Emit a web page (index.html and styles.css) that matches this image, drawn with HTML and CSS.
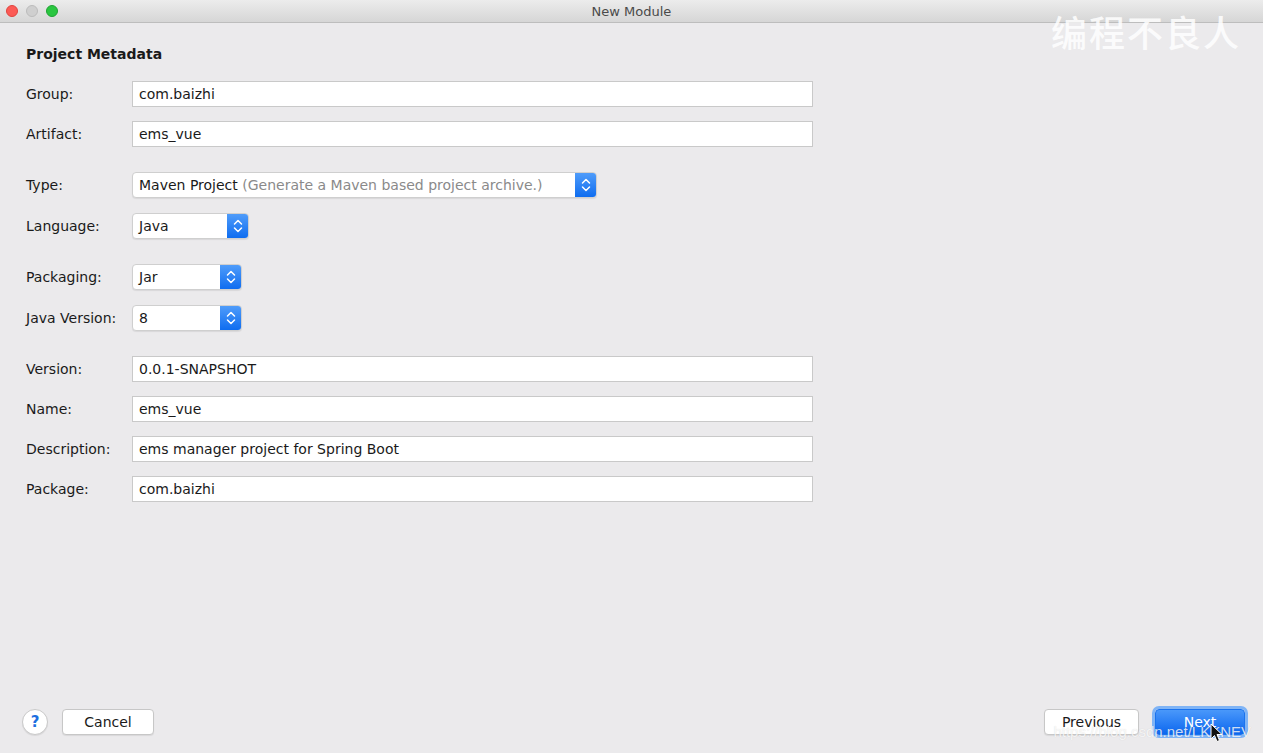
FILE: index.html
```html
<!DOCTYPE html>
<html lang="en">
<head>
    <meta charset="UTF-8">
    <title>New Module</title>
    <link rel="stylesheet" href="styles.css">
</head>
<body>
    <div class="window">
        <div class="titlebar">
            <div class="lights">
                <span class="light red"></span>
                <span class="light gray"></span>
                <span class="light green"></span>
            </div>
            <div class="title">New Module</div>
            <div class="watermark-top">编程不良人</div>
        </div>

        <div class="content">
            <h1 class="heading">Project Metadata</h1>

            <div class="group">
                <div class="row">
                    <label>Group:</label>
                    <div class="field wide">com.baizhi</div>
                </div>
                <div class="row">
                    <label>Artifact:</label>
                    <div class="field wide">ems_vue</div>
                </div>
            </div>

            <div class="group selects">
                <div class="row">
                    <label>Type:</label>
                    <div class="select type-select">
                        <span class="select-text">Maven Project <span class="hint">(Generate a Maven based project archive.)</span></span>
                        <span class="select-btn">
                            <svg width="10" height="16" viewBox="0 0 10 16"><path d="M1.5 6 L5 2.5 L8.5 6 M1.5 10 L5 13.5 L8.5 10" fill="none" stroke="#fff" stroke-width="1.5" stroke-linecap="round" stroke-linejoin="round"/></svg>
                        </span>
                    </div>
                </div>
                <div class="row">
                    <label>Language:</label>
                    <div class="select lang-select">
                        <span class="select-text">Java</span>
                        <span class="select-btn">
                            <svg width="10" height="16" viewBox="0 0 10 16"><path d="M1.5 6 L5 2.5 L8.5 6 M1.5 10 L5 13.5 L8.5 10" fill="none" stroke="#fff" stroke-width="1.5" stroke-linecap="round" stroke-linejoin="round"/></svg>
                        </span>
                    </div>
                </div>
            </div>

            <div class="group selects">
                <div class="row">
                    <label>Packaging:</label>
                    <div class="select small-select">
                        <span class="select-text">Jar</span>
                        <span class="select-btn">
                            <svg width="10" height="16" viewBox="0 0 10 16"><path d="M1.5 6 L5 2.5 L8.5 6 M1.5 10 L5 13.5 L8.5 10" fill="none" stroke="#fff" stroke-width="1.5" stroke-linecap="round" stroke-linejoin="round"/></svg>
                        </span>
                    </div>
                </div>
                <div class="row">
                    <label>Java Version:</label>
                    <div class="select small-select">
                        <span class="select-text">8</span>
                        <span class="select-btn">
                            <svg width="10" height="16" viewBox="0 0 10 16"><path d="M1.5 6 L5 2.5 L8.5 6 M1.5 10 L5 13.5 L8.5 10" fill="none" stroke="#fff" stroke-width="1.5" stroke-linecap="round" stroke-linejoin="round"/></svg>
                        </span>
                    </div>
                </div>
            </div>

            <div class="group">
                <div class="row">
                    <label>Version:</label>
                    <div class="field wide">0.0.1-SNAPSHOT</div>
                </div>
                <div class="row">
                    <label>Name:</label>
                    <div class="field wide">ems_vue</div>
                </div>
                <div class="row">
                    <label>Description:</label>
                    <div class="field wide">ems manager project for Spring Boot</div>
                </div>
                <div class="row">
                    <label>Package:</label>
                    <div class="field wide">com.baizhi</div>
                </div>
            </div>
        </div>

        <div class="footer">
            <div class="footer-left">
                <button class="help-btn">?</button>
                <button class="btn cancel-btn">Cancel</button>
            </div>
            <div class="footer-right">
                <button class="btn prev-btn">Previous</button>
                <button class="btn next-btn">Next</button>
            </div>
            <div class="watermark-bottom">https://blog.csdn.net/LKKNEV</div>
            <svg class="cursor" width="14" height="20" viewBox="0 0 14 20"><path d="M1 1 L1 16 L4.5 12.5 L7 18.5 L9.5 17.5 L7 11.5 L12 11.5 Z" fill="#111" stroke="#fff" stroke-width="1"/></svg>
        </div>
    </div>
</body>
</html>
```

FILE: styles.css
```css
* {
    margin: 0;
    padding: 0;
    box-sizing: border-box;
}

body {
    width: 1263px;
    height: 753px;
    overflow: hidden;
    background: #ebeaec;
    font-family: "DejaVu Sans", "Noto Sans CJK SC", sans-serif;
    font-size: 14px;
    color: #1a1a1a;
}

.window {
    height: 753px;
    display: flex;
    flex-direction: column;
}

.titlebar {
    position: relative;
    height: 23px;
    background: linear-gradient(#ececec, #d6d6d6);
    border-bottom: 1px solid #bdbdbd;
    display: flex;
    align-items: center;
    justify-content: center;
}

.lights {
    position: absolute;
    left: 6px;
    top: 5px;
    display: flex;
    gap: 8px;
}

.light {
    width: 12px;
    height: 12px;
    border-radius: 50%;
}

.light.red { background: #fc5a55; border: 1px solid #e0443e; }
.light.gray { background: #cfcfcf; border: 1px solid #bcbcbc; }
.light.green { background: #2ac640; border: 1px solid #1fa332; }

.title {
    font-size: 13px;
    color: #4a4a4a;
}

.watermark-top {
    position: absolute;
    left: 1051px;
    top: 9px;
    font-family: "Noto Sans CJK SC", sans-serif;
    font-size: 36px;
    line-height: 44px;
    letter-spacing: 2px;
    font-weight: 500;
    color: rgba(255, 255, 255, 0.85);
    z-index: 2;
}

.content {
    flex: 1;
    padding: 22px 0 0 26px;
}

.heading {
    font-size: 14px;
    font-weight: bold;
    line-height: 18px;
    margin-bottom: 18px;
}

.group {
    display: flex;
    flex-direction: column;
    gap: 14px;
    margin-bottom: 25px;
}

.group.selects {
    gap: 15px;
}

.row {
    display: flex;
    align-items: center;
    height: 26px;
}

.row label {
    width: 106px;
    flex-shrink: 0;
}

.field {
    height: 26px;
    background: #fff;
    border: 1px solid #c9c9c9;
    padding: 0 6px;
    line-height: 24px;
}

.field.wide {
    width: 681px;
}

.select {
    height: 26px;
    display: flex;
    background: #fff;
    border: 1px solid #cfcfcf;
    border-radius: 4px;
    box-shadow: 0 1px 1px rgba(0, 0, 0, 0.08);
    overflow: hidden;
}

.type-select { width: 465px; }
.lang-select { width: 117px; }
.small-select { width: 110px; }

.select-text {
    flex: 1;
    padding-left: 6px;
    line-height: 24px;
    white-space: nowrap;
}

.hint {
    color: #8a8a8a;
}

.select-btn {
    width: 21px;
    background: linear-gradient(#4f9cfa, #0f6df0);
    display: flex;
    align-items: center;
    justify-content: center;
}

.footer {
    position: relative;
    height: 56px;
    display: flex;
    justify-content: space-between;
    align-items: flex-start;
    padding: 12px 18px 0 22px;
}

.footer-left,
.footer-right {
    display: flex;
    align-items: center;
    gap: 9px;
}

.footer-right {
    gap: 16px;
}

.help-btn {
    width: 26px;
    height: 26px;
    border-radius: 50%;
    background: #fff;
    border: 1px solid #c9c9c9;
    color: #1d6fe0;
    font-family: "DejaVu Sans", sans-serif;
    font-size: 15px;
    font-weight: bold;
    margin-right: 5px;
    box-shadow: 0 1px 1px rgba(0, 0, 0, 0.08);
}

.btn {
    height: 26px;
    border-radius: 4px;
    font-family: "DejaVu Sans", sans-serif;
    font-size: 14px;
    background: #fff;
    border: 1px solid #c7c7c7;
    color: #1a1a1a;
    box-shadow: 0 1px 1px rgba(0, 0, 0, 0.08);
}

.cancel-btn { width: 92px; }
.prev-btn { width: 95px; }

.next-btn {
    width: 90px;
    color: #fff;
    border: 1px solid #1a73ee;
    background: linear-gradient(#4a98fa, #0c67ef);
    box-shadow: 0 0 0 3px #7fb4f6;
}

.watermark-bottom {
    position: absolute;
    right: 12px;
    top: 26px;
    font-family: "Liberation Sans", sans-serif;
    font-size: 15px;
    color: rgba(255, 255, 255, 0.8);
    text-shadow: 0 0 1px rgba(0, 0, 0, 0.15);
}

.cursor {
    position: absolute;
    left: 1210px;
    top: 26px;
}
```
